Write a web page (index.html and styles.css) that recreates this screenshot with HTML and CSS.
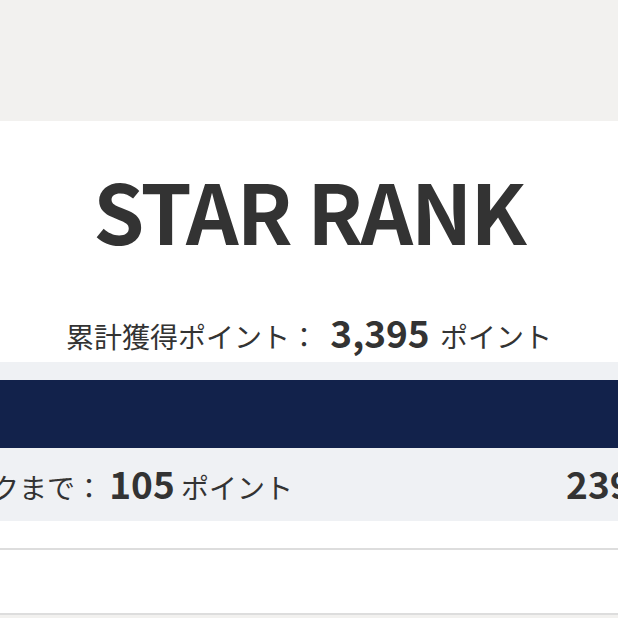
FILE: index.html
```html
<!DOCTYPE html>
<html lang="ja">
<head>
<meta charset="utf-8">
<link rel="stylesheet" href="styles.css">
</head>
<body>
  <div class="top"></div>
  <section class="card">
    <h1 class="title">STAR RANK</h1>
    <p class="total">累計獲得ポイント： <b class="num num-total">3,395</b> ポイント</p>
  </section>
  <section class="progress">
    <div class="bar"></div>
    <div class="row">
      <p class="remain">次のランクまで： <b class="num">105</b> ポイント</p>
      <p class="goal"><b class="num">2390</b> ポイント</p>
    </div>
  </section>
  <div class="spacer"></div>
  <div class="list-item"></div>
</body>
</html>
```
FILE: styles.css
```css
html, body {
  margin: 0;
  padding: 0;
}
body {
  background: #f2f1ef;
  font-family: "Noto Sans CJK JP", "Noto Sans", sans-serif;
  color: #333333;
  overflow: hidden;
  width: 618px;
  height: 618px;
}
.top {
  height: 121px;
}
.card {
  background: #ffffff;
  height: 241px;
  box-sizing: border-box;
  padding-top: 39px;
  text-align: center;
}
.title {
  margin: 0;
  font-size: 82px;
  letter-spacing: -2px;
  line-height: 100px;
  font-weight: 700;
  color: #333333;
}
.total {
  margin: 52px 0 0;
  font-size: 28px;
  line-height: 40px;
  color: #333333;
}
.num {
  font-weight: 700;
  font-size: 37px;
}
.num-total {
  margin: 0 4px 0 6px;
}
.progress {
  background: #eff1f4;
  padding-top: 18px;
}
.bar {
  height: 68px;
  background: #12224b;
}
.row {
  height: 73px;
  display: flex;
  align-items: center;
  column-gap: 273px;
  margin-left: -121px;
  white-space: nowrap;
}
.row p {
  margin: 0;
  font-size: 28px;
  line-height: 40px;
}
.spacer {
  height: 27px;
  background: #ffffff;
  border-bottom: 2px solid #dddddd;
}
.list-item {
  height: 63px;
  background: #ffffff;
  border-bottom: 2px solid #dddddd;
}
```
